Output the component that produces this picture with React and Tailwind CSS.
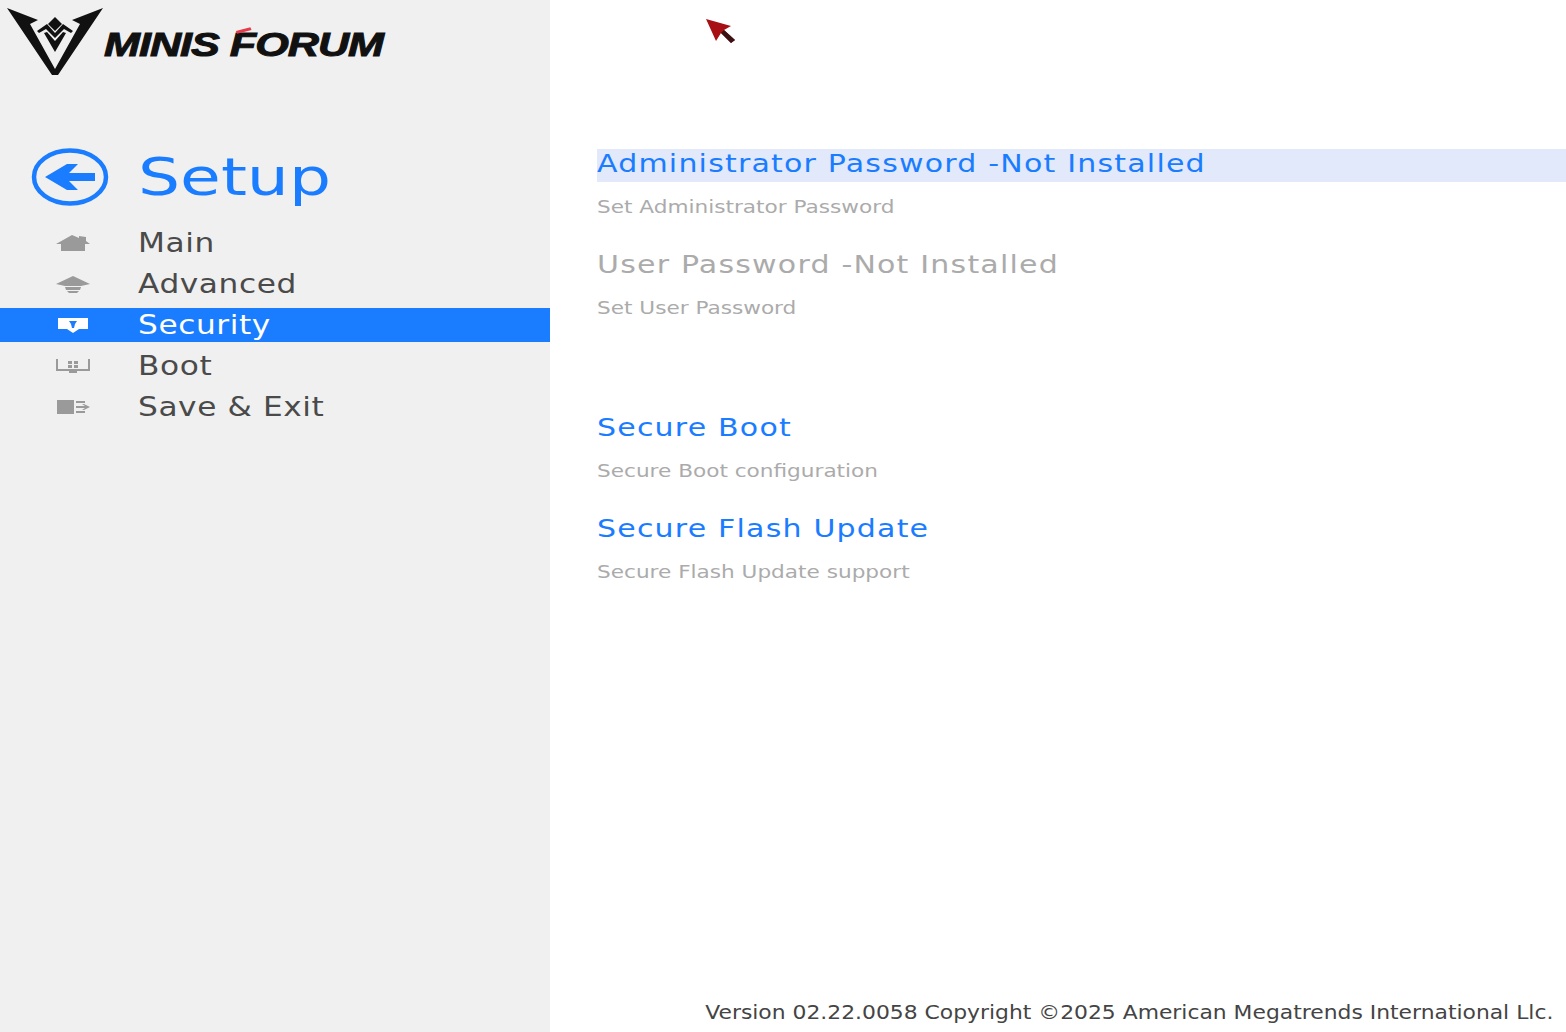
const HomeIcon = ({ color }) => (
  <svg width="36" height="20" viewBox="0 0 36 20" fill={color}>
    <path d="M1 11 L17 2 L24 5 L24 3 L31 4 L31 8 L35 11 L30 11 L30 18 L6 18 L6 11 Z" />
  </svg>
);

const CapIcon = ({ color }) => (
  <svg width="36" height="20" viewBox="0 0 36 20" fill={color}>
    <path d="M1 10 L18 2 L35 10 L26 12 L10 12 Z" />
    <path d="M10 13 L26 13 L25 16 L11 16 Z" />
    <path d="M12 17 L24 17 L22 19 L14 19 Z" />
  </svg>
);

const ShieldIcon = ({ color }) => (
  <svg width="36" height="20" viewBox="0 0 36 20">
    <path fill={color} d="M3 3 L33 3 L33 14 L24 14 L18 18 L12 14 L3 14 Z" />
    <path fill="#1a7cff" d="M14 6 L22 6 L20 9 L19 13 L17 13 L16 9 Z" />
  </svg>
);

const BootIcon = ({ color }) => (
  <svg width="36" height="20" viewBox="0 0 36 20" fill={color}>
    <path d="M1 3 L3 3 L3 13 L33 13 L33 3 L35 3 L35 15 L22 15 L22 17 L14 17 L14 15 L1 15 Z" />
    <rect x="13" y="5" width="4" height="3" />
    <rect x="19" y="5" width="4" height="3" />
    <rect x="13" y="9" width="4" height="3" />
    <rect x="19" y="9" width="4" height="3" />
  </svg>
);

const ExitIcon = ({ color }) => (
  <svg width="36" height="20" viewBox="0 0 36 20" fill={color}>
    <path d="M2 3 L19 3 L19 17 L2 17 Z" />
    <path d="M21 4 L30 4 L30 6 L21 6 Z M21 14 L30 14 L30 16 L21 16 Z" />
    <path d="M21 9 L30 9 L27 7 L29 7 L35 10 L29 13 L27 13 L30 11 L21 11 Z" />
  </svg>
);

const menu = [
  { label: "Main", Icon: HomeIcon },
  { label: "Advanced", Icon: CapIcon },
  { label: "Security", Icon: ShieldIcon, active: true },
  { label: "Boot", Icon: BootIcon },
  { label: "Save & Exit", Icon: ExitIcon },
];

const Logo = () => (
  <div className="flex items-start h-[78px] pl-[6px] pt-[7px]">
    <svg className="shrink-0" width="98" height="70" viewBox="0 0 98 70" fill="#111">
      <path d="M1 1 L32 13 L24 17 L49 62 L74 17 L66 13 L97 1 L52 68 L46 68 Z" />
      <path d="M49 10 L56 17 L49 24 L42 17 Z" />
      <path d="M31 24 L41 17 L49 26 L57 17 L67 24 L65 26 L58 22 L49 31 L40 22 L33 26 Z" />
      <path d="M38 26 L41 25 L49 34 L57 25 L60 26 L49 45 Z" />
    </svg>
    <div className="relative mt-[19px] shrink-0 origin-left scale-x-[1.27] text-[34px] leading-[36px] tracking-[-0.8px] italic font-bold text-[#111] font-['Liberation_Sans',sans-serif] [-webkit-text-stroke:1px_#111] whitespace-nowrap">
      MINIS FORUM
      <span className="absolute left-[104px] top-[3px] w-[12px] h-[3px] bg-[#e8394b] -rotate-[18deg]" />
    </div>
  </div>
);

const Item = ({ title, desc, selected, disabled, className = "" }) => (
  <div className={className}>
    <div className={`h-[33px] ${selected ? "bg-[#e1e9fb]" : ""}`}>
      <div
        className={`origin-left scale-x-[1.2] text-[25px] leading-[30px] tracking-[1px] whitespace-nowrap ${
          disabled ? "text-[#ababab]" : "text-[#1a7cff]"
        }`}
      >
        {title}
      </div>
    </div>
    <div className="mt-[12px] h-[26px] origin-left scale-x-[1.2] text-[18px] leading-[26px] text-[#ababab] whitespace-nowrap">
      {desc}
    </div>
  </div>
);

export default function App() {
  return (
    <div className="flex w-[1566px] h-[1032px] bg-white overflow-hidden font-['DejaVu_Sans',sans-serif]">
      <aside className="w-[550px] shrink-0 bg-[#f0f0f0]">
        <Logo />
        <div className="flex items-center mt-[65px] h-[70px] pl-[31px]">
          <svg className="shrink-0" width="78" height="60" viewBox="0 0 78 60" fill="none">
            <ellipse cx="39" cy="29" rx="36" ry="26.5" stroke="#1a7cff" strokeWidth="4.5" />
            <path d="M14 29 L36 16 L47 16 L38 25 L64 25 L64 33 L38 33 L47 42 L36 42 Z" fill="#1a7cff" />
          </svg>
          <span className="ml-[29px] origin-left scale-x-[1.3] text-[51px] leading-[70px] text-[#1a7cff]">Setup</span>
        </div>
        <nav className="mt-[13px] flex flex-col gap-[7px]">
          {menu.map(({ label, Icon, active }) => (
            <div
              key={label}
              className={`flex items-center h-[34px] pl-[55px] ${active ? "bg-[#1a7cff] text-white" : "text-[#4a4a4a]"}`}
            >
              <Icon color={active ? "#ffffff" : "#9a9a9a"} />
              <span className="ml-[47px] origin-left scale-x-[1.2] text-[26px] leading-[34px] tracking-[0.5px] whitespace-nowrap">{label}</span>
            </div>
          ))}
        </nav>
      </aside>

      <main className="relative flex-1 flex flex-col pl-[47px] pt-[149px]">
        <svg className="absolute left-[155px] top-[17px]" width="32" height="28" viewBox="0 0 32 28">
          <path d="M1 2 L26 9 L19 13 L30 23 L26 26 L16 16 L11 24 Z" fill="#a80f14" />
          <path d="M19 13 L30 23 L26 26 L16 16 Z" fill="#3a1114" />
        </svg>
        <Item selected title="Administrator Password -Not Installed" desc="Set Administrator Password" />
        <Item disabled className="mt-[30px]" title="User Password -Not Installed" desc="Set User Password" />
        <Item className="mt-[92px]" title="Secure Boot" desc="Secure Boot configuration" />
        <Item className="mt-[30px]" title="Secure Flash Update" desc="Secure Flash Update support" />
        <footer className="mt-auto mb-[6px] pr-[11px] origin-right scale-x-[1.15] text-right text-[19px] leading-[28px] text-[#444] whitespace-nowrap">
          Version 02.22.0058 Copyright ©2025 American Megatrends International Llc.
        </footer>
      </main>
    </div>
  );
}
